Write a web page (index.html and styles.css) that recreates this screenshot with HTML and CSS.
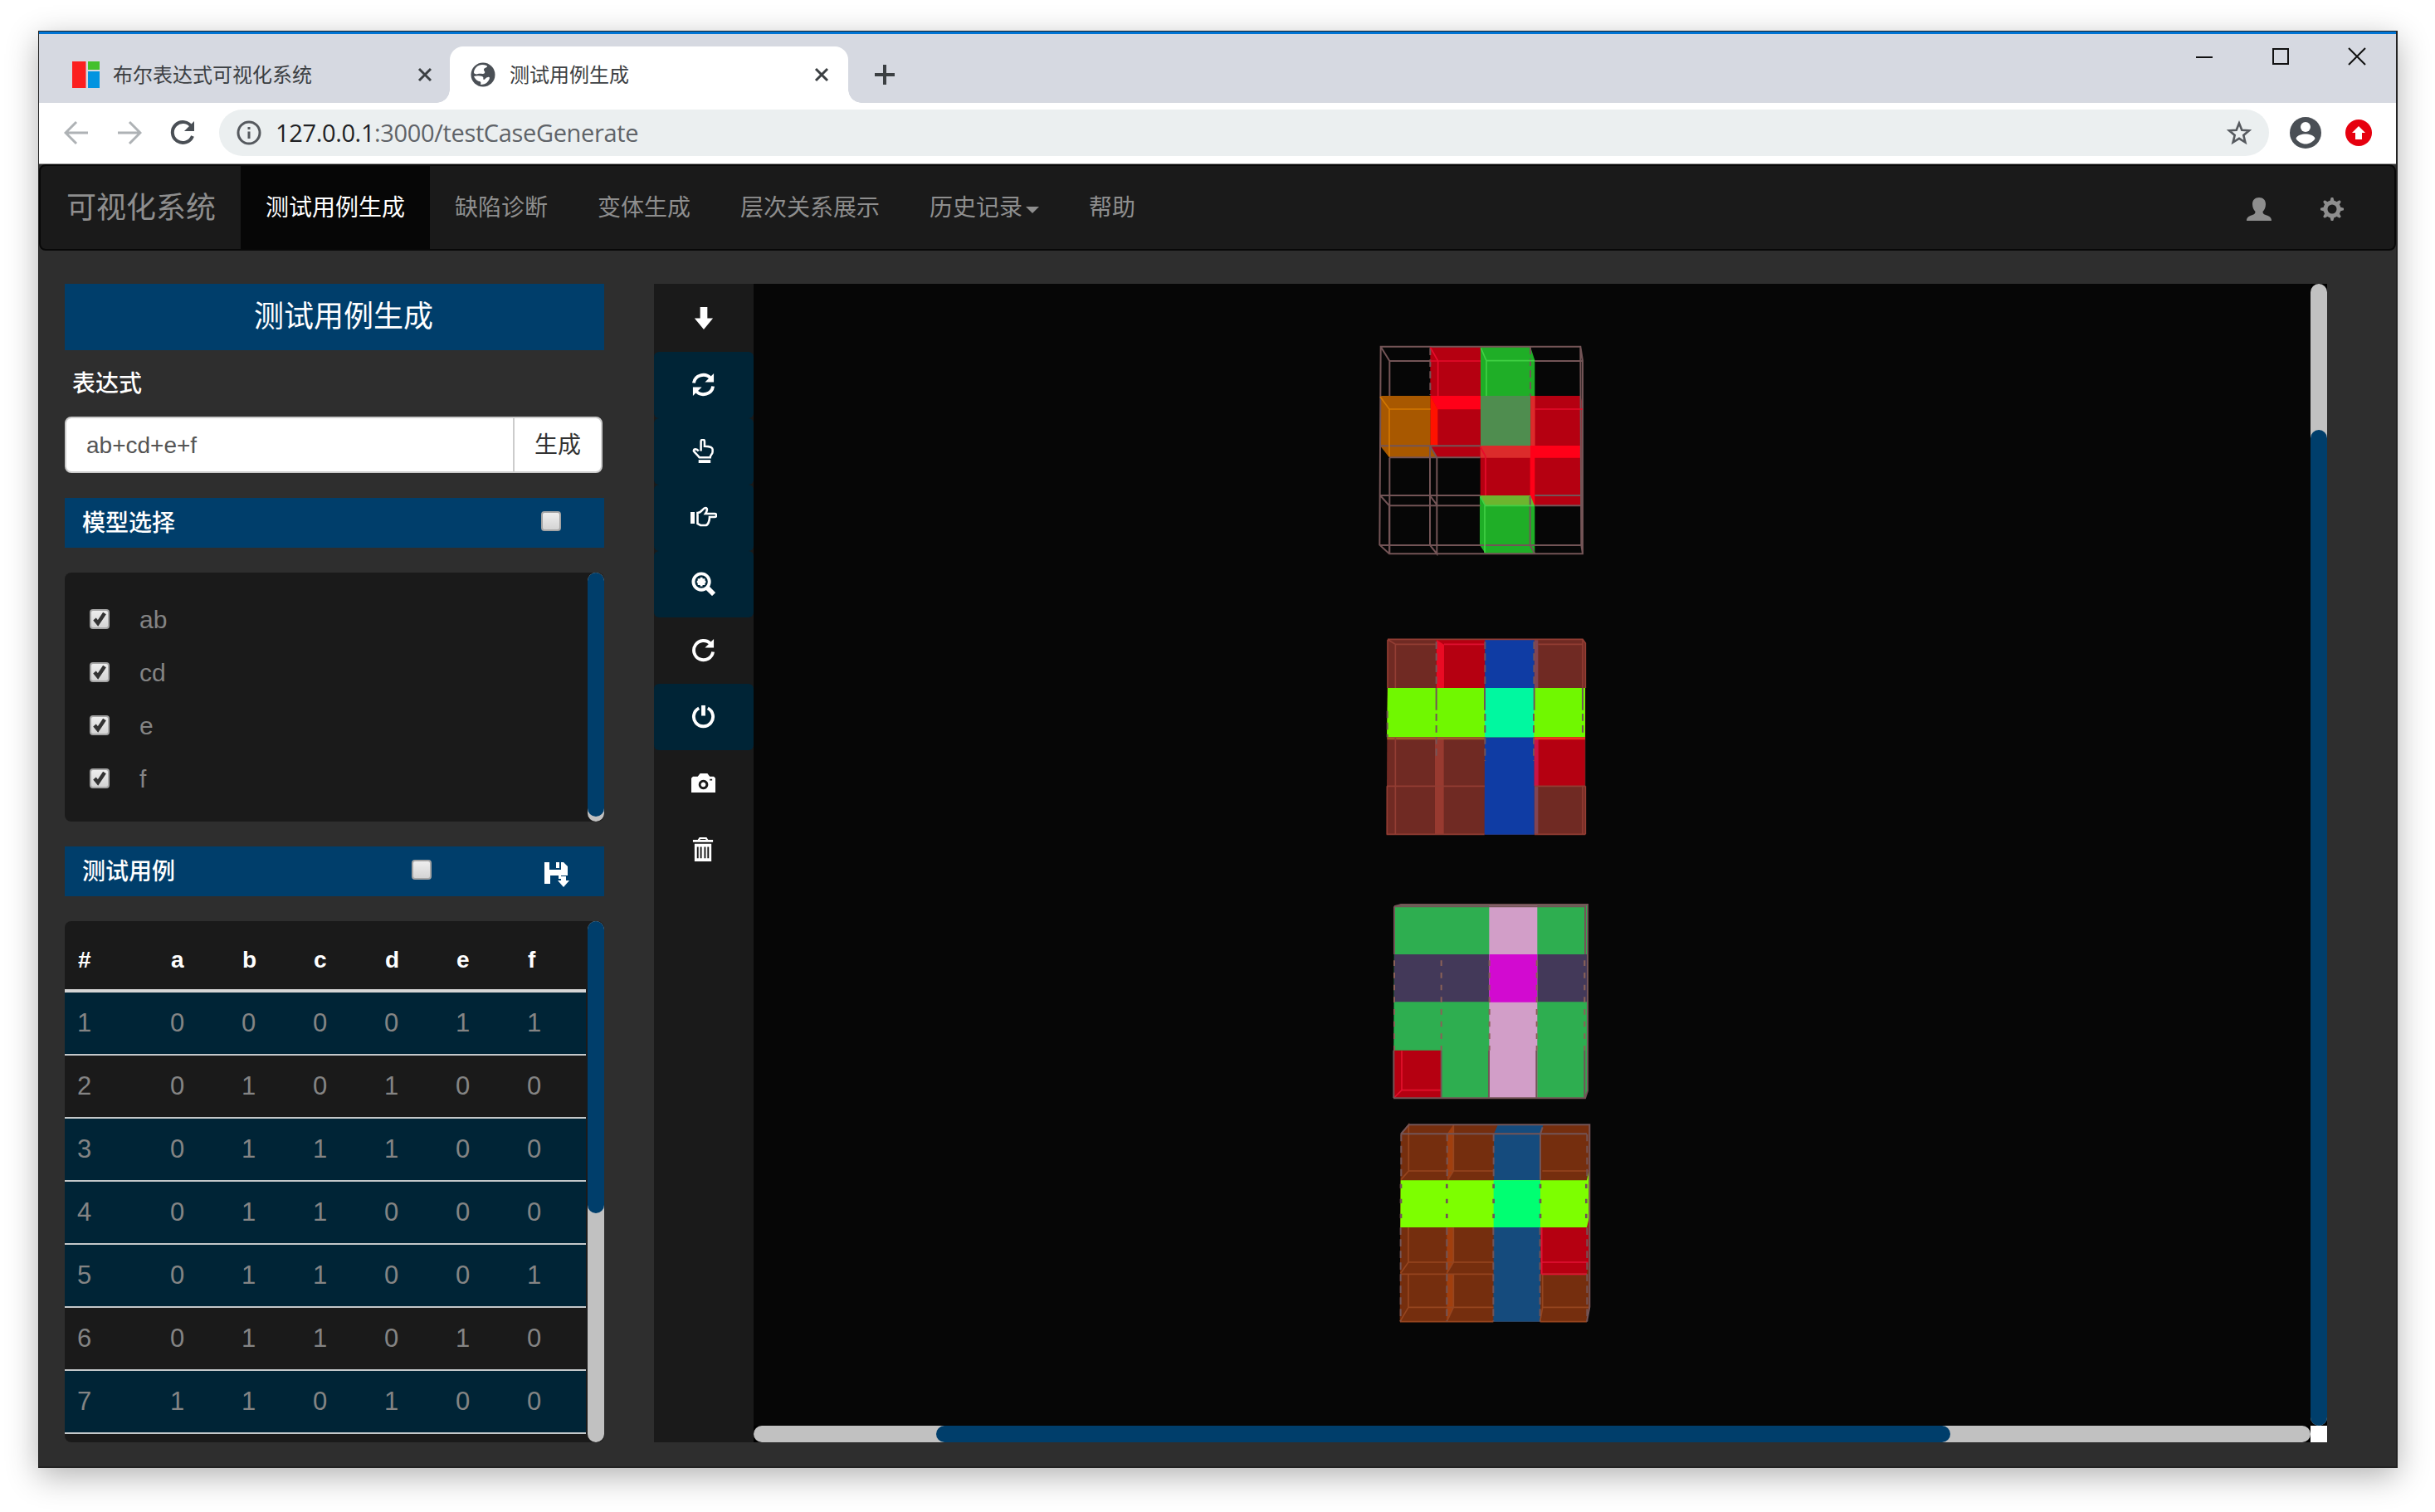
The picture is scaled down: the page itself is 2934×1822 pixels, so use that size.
FILE: index.html
```html
<!DOCTYPE html>
<html lang="zh">
<head>
<meta charset="utf-8">
<title>测试用例生成</title>
<link rel="stylesheet" href="styles.css">
</head>
<body>
<div class="window">
  <header class="tabstrip">
    <div class="tab">
      <svg class="favicon" viewBox="0 0 33 32"><path fill="#fb1f1f" d="M0 0h16.500v32H0z"/><path fill="#43c02c" d="M19 0h14v10H19z"/><path fill="#0394e0" d="M19 12h14v20H19z"/></svg>
      <span class="tab-title">布尔表达式可视化系统</span>
      <svg class="tab-close" viewBox="0 0 18 18"><path d="M2 2l14 14M16 2L2 16"/></svg>
    </div>
    <div class="tab active">
      <svg class="globe" viewBox="0 0 30 30"><circle cx="15" cy="15" r="14.500" fill="#4a4f55"/><path fill="#fff" d="M14 3c4 0 6 1 6 2 0 2-4 1-4 4 0 2 2 2 1 4-2 2-5 0-8 1-2 1-4 0-5-1 0-6 5-10 10-10zM4 17c3-1 7-1 10 0 3 2 0 3 2 4 2 0 2-3 5-3 3-1 2 3 0 5-2 3-6 4-9 4 1-3 0-4-2-4-3-1-5-4-6-6z"/></svg>
      <span class="tab-title">测试用例生成</span>
      <svg class="tab-close" viewBox="0 0 18 18"><path d="M2 2l14 14M16 2L2 16"/></svg>
    </div>
    <svg class="new-tab" viewBox="0 0 24 24"><path d="M12 0v24M0 12h24"/></svg>
    <div class="window-controls">
      <svg viewBox="0 0 22 22"><path d="M1 12h20"/></svg>
      <svg viewBox="0 0 22 22"><path d="M2 2h18v18H2z"/></svg>
      <svg viewBox="0 0 22 22"><path d="M1 1l20 20M21 1L1 21"/></svg>
    </div>
  </header>
  <div class="addressbar">
    <div class="history">
      <svg class="dim" viewBox="0 0 30 30"><path d="M29 15H3M15 2L2 15l13 13"/></svg>
      <svg class="dim" viewBox="0 0 30 30"><path d="M1 15h26M15 2l13 13-13 13"/></svg>
      <svg viewBox="0 0 30 30"><path d="M26 8A12.500 12.500 0 1 0 27 19"/><path class="solid" d="M29 1v12H17z"/></svg>
    </div>
    <div class="url">
      <svg class="info" viewBox="0 0 30 30"><circle cx="15" cy="15" r="13"/><path d="M15 13.500V22M15 8v3"/></svg>
      <span class="url-text"><b>127.0.0.1</b>:3000/testCaseGenerate</span>
      <svg class="star" viewBox="0 0 30 30"><path d="M15 3.500l3.300 8.200 8.700.6-6.700 5.700 2.100 8.500L15 21.900l-7.400 4.600 2.100-8.500L3 12.300l8.700-.6z"/></svg>
    </div>
    <svg class="avatar" viewBox="0 0 38 38"><circle cx="19" cy="19" r="19" fill="#4a4f55"/><circle cx="19" cy="12" r="6" fill="#fff"/><path fill="#fff" d="M7.500 26c1-4 7-5.500 11.500-5.500S29.500 22 30.500 26C28 30 23.500 32.500 19 32.500S10 30 7.500 26z"/></svg>
    <svg class="update" viewBox="0 0 32 32"><circle cx="16" cy="16" r="16" fill="#e6000f"/><path fill="#fff" d="M16 8l8 8h-4v8h-8v-8H8z"/></svg>
  </div>

  <nav class="navbar">
    <a class="brand">可视化系统</a>
    <a class="nav-item active">测试用例生成</a>
    <a class="nav-item">缺陷诊断</a>
    <a class="nav-item">变体生成</a>
    <a class="nav-item">层次关系展示</a>
    <a class="nav-item">历史记录<i class="caret"></i></a>
    <a class="nav-item">帮助</a>
    <div class="nav-right">
      <svg class="user" viewBox="0 0 30 28"><path d="M15 0c5 0 8 3 8 8 0 4-1.500 7-3.500 9 0 3 2 3.500 5 4.500 3 1 5.500 2.500 5.500 6.500H0c0-4 2.500-5.500 5.500-6.500 3-1 5-1.500 5-4.500-2-2-3.500-5-3.500-9 0-5 3-8 8-8z"/></svg>
      <svg class="gear" viewBox="-14 -14 28 28"><circle r="8" fill="none" stroke="#8e8e8e" stroke-width="5"/><g id="teeth"><path d="M-2.800-9l1.500-5h2.600l1.500 5zM-2.800 9l1.500 5h2.600l1.500-5zM-9-2.800l-5 1.500v2.600l5 1.500zM9-2.800l5 1.500v2.600l-5 1.500z"/></g><use href="#teeth" transform="rotate(45)"/></svg>
    </div>
  </nav>

  <main class="page">
    <aside class="sidebar">
      <h1 class="title">测试用例生成</h1>
      <label class="field-label">表达式</label>
      <div class="expr"><span class="expr-input">ab+cd+e+f</span><span class="expr-button">生成</span></div>
      <div class="section model"><span>模型选择</span><i class="check"></i></div>
      <div class="panel terms">
        <ul class="term-list">
          <li><i class="check"><svg viewBox="0 0 24 24"><path d="M6 12l4 5 8-12"/></svg></i>ab</li>
          <li><i class="check"><svg viewBox="0 0 24 24"><path d="M6 12l4 5 8-12"/></svg></i>cd</li>
          <li><i class="check"><svg viewBox="0 0 24 24"><path d="M6 12l4 5 8-12"/></svg></i>e</li>
          <li><i class="check"><svg viewBox="0 0 24 24"><path d="M6 12l4 5 8-12"/></svg></i>f</li>
        </ul>
        <div class="vscroll"><div class="thumb"></div></div>
      </div>
      <div class="section cases"><span>测试用例</span><i class="check"></i>
        <svg class="save" viewBox="0 0 30 30"><path d="M0 0h6v9h14V0h3l5 5v11h-8v4h-3v-4H7v10H0zM14 0h4v7h-4zM20 17h6v5h4l-7 8-7-8h4z"/></svg>
      </div>
      <div class="panel cases-panel">
        <div class="table">
          <div class="row head"><span>#</span><span>a</span><span>b</span><span>c</span><span>d</span><span>e</span><span>f</span></div>
          <div class="row on"><span>1</span><span>0</span><span>0</span><span>0</span><span>0</span><span>1</span><span>1</span></div>
          <div class="row"><span>2</span><span>0</span><span>1</span><span>0</span><span>1</span><span>0</span><span>0</span></div>
          <div class="row on"><span>3</span><span>0</span><span>1</span><span>1</span><span>1</span><span>0</span><span>0</span></div>
          <div class="row on"><span>4</span><span>0</span><span>1</span><span>1</span><span>0</span><span>0</span><span>0</span></div>
          <div class="row on"><span>5</span><span>0</span><span>1</span><span>1</span><span>0</span><span>0</span><span>1</span></div>
          <div class="row"><span>6</span><span>0</span><span>1</span><span>1</span><span>0</span><span>1</span><span>0</span></div>
          <div class="row on"><span>7</span><span>1</span><span>1</span><span>0</span><span>1</span><span>0</span><span>0</span></div>
        </div>
        <div class="vscroll"><div class="thumb"></div></div>
      </div>
    </aside>

    <div class="tools">
      <div class="tool"><svg viewBox="0 0 30 30"><path d="M11 1h9v14h7L15.500 29 4 15h7z"/></svg></div>
      <div class="tool on"><svg viewBox="0 0 30 30"><path class="line" d="M3 13A12 11.500 0 0 1 24 7M27 17A12 11.500 0 0 1 6 23"/><path d="M28 1v11H17zM2 29V18h11z"/></svg></div>
      <div class="tool on"><svg viewBox="0 0 30 30"><path class="thin" d="M12 15V3c0-3 4.500-3 4.500 0v6c4 0 10 1 10 4v3c0 3-3 4-3 7H10c-2-3-5-5-7-8 0-3 4-3 6 0"/><path d="M9 26h15v4H9z"/></svg></div>
      <div class="tool on"><svg class="wide" viewBox="0 0 32 30"><path d="M0 8h5v14H0z"/><path class="thin" d="M8.500 9C13 9 15 3 18 3c3 0 2 4 0 7h11c3 0 3 4 0 4h-6c0 5-2 10-5 10h-6l-3.500-2z"/></svg></div>
      <div class="tool on"><svg viewBox="0 0 30 30"><circle class="line" cx="12.500" cy="12.500" r="10"/><path class="fat" d="M20 20l8 8"/><path d="M10 8.500h1V7h3v1.500h3V11h1v3h-1v2.500h-3V18h-3v-1.500H8V14H7v-3h1V8.500z"/></svg></div>
      <div class="tool"><svg viewBox="0 0 30 30"><path class="line" d="M24 7A12 12 0 1 0 27 17"/><path d="M28 1v11H17z"/></svg></div>
      <div class="tool on"><svg viewBox="0 0 30 30"><path class="line" d="M9.500 4.500A12 12 0 1 0 20.500 4.500"/><path d="M12.500 1h5v13h-5z"/></svg></div>
      <div class="tool"><svg viewBox="0 0 30 30"><path fill-rule="evenodd" d="M2 7h6l3-4h9l3 4h5l2 2v18H0V9zM15 11a6 6 0 1 0 .1 0zM15 14a3 3 0 1 1-.1 0zM23 10v2h3v-2z"/></svg></div>
      <div class="tool"><svg viewBox="0 0 30 30"><path fill-rule="evenodd" d="M10 0h9l2 3h6v3H2V3h6zM11 2v1h7V2zM4 8h21v22H4zM7 12v14h2V12zM11 12v14h2V12zM16 12v14h2V12zM20 12v14h2V12z"/></svg></div>
    </div>

    <div class="viewer">
      <svg class="scene" viewBox="908 342 1876 1376">
        <g transform="translate(1640 390) scale(.33333)">
          <path fill="#b50011" d="M250 83h182v178H250zM250 261h182v223H276l-26-42zM611 261h182l8 30v150H611zM431 441h370v217H627l-14-37H431z"/>
          <path fill="#1fae27" d="M432 83h180l16 50v128H432zM429 621h183l16 38v173H450l-21-32z"/>
          <path fill="#a85800" d="M69 261h182v180l25 43H102l-33-42z"/>
          <path fill="#ff0018" d="M251 261h181v49H276zM611 441h184v44H628v173h-2l-15-37z"/>
          <path fill="#ff1200" d="M251 261l26 49v130h-26z"/>
          <path fill="#4f8d4f" d="M432 261h181v180H432z"/>
          <path fill="#dc2b2b" d="M613 261h16v180h-16zM431 441h181v44H431z"/>
          <path fill="#6db52e" d="M431 621h181l15 37H449z"/>
          <g class="wire">
            <path d="M71 83h722l8 51v698H102l-35-32zM71 83l32 52v126M103 485v347M103 135h147M628 135h173M793 83l3 718 5 31M69 442h362M69 621h362M102 658h329M628 621h168M67 801h726M249 442v359l25 31V484l-25-42M69 621l33 37v174M251 624l25 34M611 624v177l17 31M628 658h173M102 484h329"/>
            <path class="dash" d="M250 88v170M612 85v176"/>
          </g>
          <path class="edge" stroke="#e80b2b" d="M250 85l28 50v126M250 135h182M628 309h173M450 480v141M431 445l19 35"/>
          <path class="edge" stroke="#40d044" d="M433 88l20 46v127M453 134h175M447 658v170M431 625l18 33h178"/>
          <path class="edge" stroke="#d27700" d="M69 264l33 45v172M102 309h149"/>
        </g>
        <g transform="translate(1640 750) scale(.33333)">
          <path fill="#702a23" d="M96 60h706l9 15v692H92z"/>
          <path fill="#b50011" d="M272 60h176v178H272zM625 415h184v177H625z"/>
          <path fill="#0f3ca4" d="M448 60h178v707H446z"/>
          <path fill="#70f800" d="M96 237h714v178H93z"/>
          <path fill="#00f8a0" d="M448 237h177v178H447z"/>
          <path fill="#e90b24" d="M273 64l27 16v157h-27z"/><path fill="#c91446" d="M626 417h15v174h-15z"/>
          <path fill="#983a30" d="M267 415h32v352h-32z"/><path fill="#814453" d="M627 64h13v173h-13zM627 594h13v173h-13z"/>
          <path stroke="#a05c28" stroke-width="9" d="M94 419h353"/><path stroke="#ef371f" stroke-width="9" d="M627 419h183"/>
          <path class="edge" stroke="#923d33" d="M96 62l28 17v158M124 79h148M640 79h163M124 418v348M93 592h354M92 766h354M627 592h184M627 766h184M94 592v174M96 62v175M96 61h705l10 14v162M811 592v174M801 62v175M801 592v174"/>
          <path class="edge" stroke="#e01030" d="M300 79h148"/>
          <g class="wire"><path d="M272 237v80M447 237v80M626 237v80M801 237v80"/><path class="dash" d="M272 70v167M272 330v165M448 70v167M448 330v170M625 70v167M624 330v170M801 330v85M95 320v95"/></g>
        </g>
        <g transform="translate(1640 1070) scale(.33333)">
          <path fill="#2eae50" d="M120 67l25-9h674v675l-8 28H117z"/>
          <path fill="#433959" d="M120 240h699v172H119z"/>
          <path fill="#d29ec8" d="M463 58h174v702H463z"/>
          <path fill="#d20ad0" d="M464 240h172v173H463z"/>
          <path fill="#b50011" d="M119 587h170v172H117z"/>
          <path class="edge" stroke="#e4112d" d="M147 589v142h140M147 731l-28 28"/>
          <g class="wire"><path d="M120 67l25-7h674v673l-9 27H117M120 67v173M120 67h690v173M118 587v172M290 587v172M462 587v172M634 587v172M808 587v172"/><path class="dash3" stroke="#8a6157" d="M290 262v325M464 262v325M635 262v325M808 262v325M120 262v325"/></g>
        </g>
        <g transform="translate(1640 1340) scale(.33333)">
          <path fill="#752e0e" d="M143 79l31-34h652v660l-10 53H140z"/>
          <path fill="#a13f0e" d="M311 79l22-32v165l-21 33zM310 418h24v125l-24 40zM310 588h24v118l-24 51z"/>
          <path fill="#154b7d" d="M480 79l15-34h164l-11 34v679H478z"/>
          <path fill="#b50011" d="M649 418h168l7-35v165l-9 38H649z"/>
          <path fill="#7dff00" d="M143 247h673l8-34v170l-8 34H142z"/>
          <path fill="#00ff72" d="M479 247h169v170H479z"/>
          <path class="edge" stroke="#96451f" d="M146 79l26-33v167l-28 32M172 213h307M334 47v166l-20 32M655 213h168M171 418v125l-28 40M171 543h308M143 586h335M649 586h167M171 588v118l-30 51M171 706h308M334 418v125l-24 40M334 588v118l-24 51M656 706h168M656 588v118l-9 51M141 758h337M647 758h169"/>
          <path class="edge" stroke="#e31134" d="M653 418v168M653 543h167M653 586h163"/>
          <g class="wire"><path d="M144 79l29-33h653v659l-10 53M144 79h672M656 55l-8 24v166"/><path class="dash" d="M145 80v166M311 80v166M479 80v166M817 80v166M143 418v339M310 418v339M478 418v339M647 418v339M817 418v339"/><path class="dots" d="M144 260v135M310 260v135M479 260v135M648 260v135M814 260v135"/></g>
        </g>
      </svg>
      <div class="vscroll"><div class="thumb"></div></div>
      <div class="hscroll"><div class="thumb"></div></div>
      <div class="corner"></div>
    </div>
  </main>
</div>
</body>
</html>
```
FILE: styles.css
```css
* { box-sizing: border-box; }
body {
  margin: 0;
  padding: 37px 45px 53px 46px;
  background: #fff;
  font-family: "Liberation Sans", "Noto Sans CJK SC", sans-serif;
  font-size: 28px;
  line-height: 40px;
  overflow: hidden;
}
svg { display: block; flex: none; }
ul, h1 { margin: 0; padding: 0; font-weight: 400; list-style: none; }

.window {
  width: 2843px;
  height: 1732px;
  border: solid #222;
  border-width: 1px 2px 2px 1px;
  background: #2e2e2e;
  box-shadow: 0 10px 36px rgba(0, 0, 0, .3);
  display: flex;
  flex-direction: column;
}

/* browser chrome */
.tabstrip {
  height: 86px;
  flex: none;
  border-top: 3px solid #0074d4;
  background: #d6d9e1;
  display: flex;
}
.tab {
  display: flex;
  align-items: center;
  margin-top: 15px;
  height: 68px;
  width: 495px;
  padding-left: 40px;
  font-size: 24px;
  color: #3c4043;
}
.tab.active {
  position: relative;
  width: 480px;
  padding-left: 25px;
  background: #fff;
  border-radius: 16px 16px 0 0;
}
.tab.active::before, .tab.active::after {
  content: "";
  position: absolute;
  bottom: 0;
  left: -16px;
  width: 16px;
  height: 16px;
  background: radial-gradient(circle at 0 0, transparent 15.5px, #fff 16px);
}
.tab.active::after { left: auto; right: -16px; transform: scaleX(-1); }
.tab-title { padding-top: 2px; }
.favicon { width: 33px; height: 32px; margin-right: 16px; }
.globe { width: 30px; height: 30px; margin-right: 17px; }
.tab-close { width: 18px; height: 18px; margin-left: auto; margin-right: 23px; fill: none; stroke: #3c4043; stroke-width: 3; }
.tab:not(.active) .tab-close { margin-right: 21px; }
.new-tab { width: 24px; height: 24px; margin: 37px 0 0 32px; stroke: #3c4043; stroke-width: 4; }
.window-controls { display: flex; gap: 70px; margin: 16px 36px 0 auto; }
.window-controls svg { width: 22px; height: 22px; fill: none; stroke: #111; stroke-width: 2; }

.addressbar {
  height: 74px;
  flex: none;
  display: flex;
  align-items: center;
  padding: 0 29px 2px 30px;
  background: #fff;
  border-bottom: 1px solid #999;
}
.history { display: flex; gap: 34px; width: 187px; }
.history svg { width: 30px; height: 30px; fill: none; stroke: #4a4f55; stroke-width: 4; }
.history .dim { stroke: #aeb2b5; stroke-width: 3; }
.history .solid { fill: #4a4f55; stroke: none; }
.url {
  flex: 1;
  height: 56px;
  margin-right: 25px;
  padding: 0 21px;
  display: flex;
  align-items: center;
  border-radius: 28px;
  background: #ebeff0;
}
.info { width: 30px; height: 30px; margin-right: 17px; fill: none; stroke: #55595e; stroke-width: 3; }
.url-text { font: 29px/40px "Open Sans", sans-serif; letter-spacing: -.36px; color: #5f6368; }
.url-text b { font-weight: 400; color: #202124; }
.star { width: 30px; height: 30px; margin-left: auto; fill: none; stroke: #55595e; stroke-width: 2.6; }
.avatar { width: 38px; height: 38px; margin-right: 29px; }
.update { width: 32px; height: 32px; }

/* navigation */
.navbar {
  height: 104px;
  flex: none;
  display: flex;
  border: 2px solid #080808;
  border-radius: 8px;
  background: #1a1a1a;
  color: #8e8e8e;
  line-height: 102px;
}
.brand { width: 241px; padding-left: 31px; font-size: 36px; }
.nav-item { padding: 0 30px; }
.nav-item.active { height: 100px; background: #060606; color: #fff; }
.caret {
  display: inline-block;
  margin-left: 4px;
  vertical-align: middle;
  border: 8px solid transparent;
  border-top-color: #8e8e8e;
  border-bottom: 0;
}
.nav-right { display: flex; align-items: center; gap: 59px; margin-left: auto; padding: 3px 61px 0 0; fill: #8e8e8e; }
.user { width: 30px; height: 28px; }
.gear { width: 28px; height: 28px; }

/* page */
.page { flex: 1; display: flex; padding: 40px 0 0 31px; }
.sidebar { width: 650px; color: #fff; }
.title { height: 80px; padding-left: 22px; line-height: 80px; font-size: 36px; text-align: center; background: #003e6b; }
.field-label { display: block; height: 80px; padding-left: 9px; line-height: 82px; font-weight: 500; }
.expr {
  display: flex;
  width: 648px;
  height: 68px;
  border: 2px solid #ccc;
  border-radius: 8px;
  background: #fff;
  line-height: 66px;
}
.expr-input { width: 538px; padding-left: 24px; color: #555; }
.expr-button { flex: 1; border-left: 2px solid #ccc; text-align: center; color: #333; }
.section {
  height: 60px;
  margin-top: 30px;
  padding: 2px 22px 0 21px;
  display: flex;
  align-items: center;
  background: #003e6b;
  font-weight: 500;
}
.check {
  width: 24px;
  height: 24px;
  flex: none;
  border: 2px solid #a5a5a5;
  border-radius: 4px;
  background: linear-gradient(#eee, #d4d4d4);
}
.check svg { margin: -2px; width: 24px; height: 24px; fill: none; stroke: #333; stroke-width: 4.5; }
.model .check { margin: -6px 30px 0 auto; }
.cases .check { margin: -6px 136px 0 auto; }
.save { width: 30px; height: 30px; margin: 5px 20px 0 0; fill: #fff; }
.panel { display: flex; margin-top: 30px; border-radius: 8px; background: #1a1a1a; overflow: hidden; }
.terms { height: 300px; font-size: 30px; }
.term-list { flex: 1; padding: 25px 0 0 30px; }
.term-list li { height: 64px; display: flex; align-items: center; line-height: 66px; color: #848484; }
.term-list .check { margin: -2px 36px 0 0; }
.vscroll { width: 20px; flex: none; border-radius: 10px; background: #c1c1c1; }
.thumb { border-radius: 10px; background: #003e6b; }
.terms .thumb { height: 294px; }
.cases-panel { height: 628px; font-size: 31px; }
.cases-panel .thumb { height: 352px; }
.table { width: 628px; margin-right: 2px; }
.row {
  display: grid;
  grid-template-columns: 112px repeat(6, 86px);
  height: 76px;
  line-height: 74px;
  border-bottom: 2px solid #c4c8ca;
  color: #848484;
}
.row span { padding-left: 15px; }
.row.on { background: #002436; }
.row.head { height: 86px; line-height: 94px; border-bottom: 4px solid #d5d5d5; font-size: 28px; font-weight: 700; color: #fff; }
.row.head span { padding-left: 16px; }

.tools { width: 120px; height: 1396px; margin-left: 60px; padding-top: 2px; background: #1a1a1a; }
.tool { height: 80px; padding: 0 1px 1px 0; display: flex; align-items: center; justify-content: center; border-radius: 6px; }
.tool.on { background: #002436; }
.tool svg { width: 29px; height: 29px; fill: #fff; }
.tool .wide { width: 32px; height: 30px; }
.tool .line { fill: none; stroke: #fff; stroke-width: 4; }
.tool .thin { fill: none; stroke: #fff; stroke-width: 2.6; }
.tool .fat { stroke: #fff; stroke-width: 6; }

.viewer { display: grid; grid-template: 1376px 20px / 1876px 20px; height: 1396px; background: #000; }
.scene { width: 1876px; height: 1376px; background: #060606; }
.viewer .vscroll .thumb { margin-top: 176px; height: 1200px; }
.hscroll { border-radius: 10px; background: #c1c1c1; }
.hscroll .thumb { width: 1222px; height: 20px; margin-left: 220px; }
.corner { background: #fff; }
.edge { fill: none; stroke-width: 5; }
.wire { fill: none; stroke: #735456; stroke-width: 6; }
.dash { stroke-dasharray: 26 16; }
.dash3 { stroke-dasharray: 20 24; }
.dots { stroke-width: 8; stroke-dasharray: 16 38; }
```
